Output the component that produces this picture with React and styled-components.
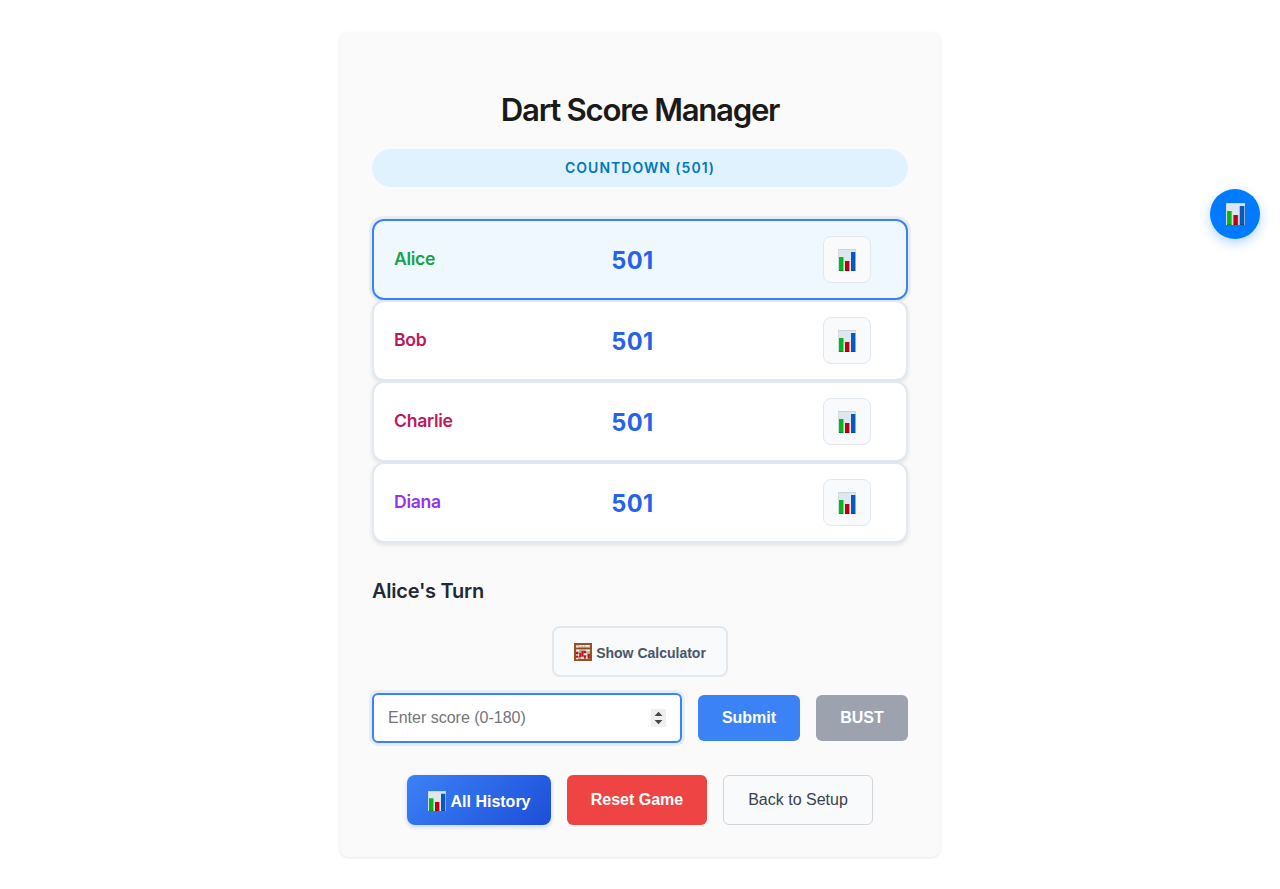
import React, { useState } from "react";
import styled, { createGlobalStyle, css } from "styled-components";

const GlobalStyle = createGlobalStyle`
  *, *::before, *::after { box-sizing: border-box; }
  body {
    margin: 0;
    background: #ffffff;
    font-family: Inter, "Liberation Sans", sans-serif;
    -webkit-font-smoothing: antialiased;
  }
  button, input { font-family: "Liberation Sans", Arial, sans-serif; }
`;

const Page = styled.div`
  padding: 32px 0;
`;

const Panel = styled.main`
  width: 600px;
  height: 825px;
  margin: 0 auto;
  padding: 32px;
  border-radius: 8px;
  background: #fafafa;
  box-shadow: 0 1px 3px rgba(0, 0, 0, 0.1);
`;

const Title = styled.h1`
  margin: 26px 0 19px;
  font-size: 31.2px;
  line-height: 40px;
  font-weight: 600;
  letter-spacing: -1.3px;
  text-align: center;
  color: #1a1a1a;
`;

const ModeBadge = styled.div`
  height: 38px;
  margin-bottom: 32px;
  border-radius: 20px;
  background: #e0f2fe;
  color: #0277bd;
  font-size: 14px;
  line-height: 38px;
  font-weight: 600;
  letter-spacing: 1px;
  text-align: center;
  text-transform: uppercase;
`;

const PlayerRow = styled.div`
  display: grid;
  grid-template-columns: 63px 1fr 78px;
  align-items: center;
  height: 81px;
  padding: 0 20px;
  border: 2px solid #e2e8f0;
  border-radius: 12px;
  background: #ffffff;
  box-shadow: 0 2px 4px rgba(0, 0, 0, 0.1);
  ${(p) =>
    p.$active &&
    css`
      border-color: #3b82f6;
      background: #f0f8ff;
      box-shadow: 0 0 0 3px rgba(59, 130, 246, 0.1);
    `}
`;

const PlayerName = styled.span`
  color: ${(p) => p.$color};
  font-size: 17.6px;
  line-height: 26px;
  font-weight: 600;
  letter-spacing: -0.3px;
  padding-bottom: 2px;
`;

const PlayerScore = styled.span`
  color: #2563eb;
  font-size: 23.6px;
  line-height: 36px;
  font-weight: 700;
  letter-spacing: 0.4px;
  text-align: center;
  padding-top: 3px;
`;

const HistoryButton = styled.button`
  display: flex;
  align-items: center;
  justify-content: center;
  justify-self: center;
  width: 48px;
  height: 47px;
  padding: 1px 0 0;
  border: 1px solid #e2e8f0;
  border-radius: 8px;
  background: #f8fafc;
`;

const TurnHeading = styled.h2`
  margin: 33px 0 20px;
  font-size: 20px;
  line-height: 30px;
  font-weight: 600;
  letter-spacing: -0.25px;
  color: #1f2937;
`;

const CalculatorButton = styled.button`
  display: flex;
  align-items: center;
  justify-content: center;
  gap: 4px;
  width: 176px;
  height: 51px;
  margin: 0 auto 16px;
  padding: 1px 0 0;
  border: 2px solid #e2e8f0;
  border-radius: 8px;
  background: #f8fafc;
  color: #475569;
  font-size: 14px;
  font-weight: 600;
  span { padding-top: 2px; }
`;

const ScoreForm = styled.div`
  display: flex;
  align-items: center;
  gap: 16px;
  margin-bottom: 32px;
`;

const ScoreField = styled.div`
  position: relative;
  display: flex;
  flex: 1;
  min-width: 0;
`;

const ScoreInput = styled.input`
  width: 100%;
  height: 50px;
  padding: 0 14px;
  border: 2px solid #3b82f6;
  border-radius: 6px;
  outline: none;
  background: #ffffff;
  font-size: 16px;
  caret-color: transparent;
  box-shadow: 0 0 0 3px rgba(59, 130, 246, 0.1);
  appearance: textfield;
  &::placeholder { color: #757575; }
`;

const Spinner = styled.svg`
  position: absolute;
  right: 16px;
  top: 16px;
`;

const Button = styled.button`
  display: flex;
  align-items: center;
  justify-content: center;
  gap: 4px;
  width: ${(p) => p.$width}px;
  height: ${(p) => p.$height || 50}px;
  padding: 0;
  border: none;
  border-radius: 6px;
  font-size: 16px;
  font-weight: 600;
  color: #ffffff;
  background: ${(p) => p.$bg};
`;

const AllHistoryButton = styled(Button)`
  padding: 2px 0 0 1px;
  border-radius: 8px;
  background: linear-gradient(135deg, #3b82f6 0%, #1d4ed8 100%);
  box-shadow: 0 2px 4px rgba(59, 130, 246, 0.3);
  span { padding-top: 1px; }
`;

const BackButton = styled(Button)`
  border: 1px solid #d1d5db;
  background: #f9fafb;
  color: #374151;
  font-weight: 400;
`;

const Actions = styled.div`
  display: flex;
  justify-content: center;
  gap: 16px;
`;

const FloatingButton = styled.button`
  position: fixed;
  top: 189px;
  right: 20px;
  display: flex;
  align-items: center;
  justify-content: center;
  width: 50px;
  height: 50px;
  padding: 0;
  border: none;
  border-radius: 50%;
  background: #007bff;
  box-shadow: 0 4px 12px rgba(0, 123, 255, 0.3);
`;

function ChartIcon({ width = 18, height = 22 }) {
  return (
    <svg width={width} height={height} viewBox="0 0 18 22" preserveAspectRatio="none" aria-hidden="true">
      <rect width="18" height="22" fill="#dfe7ee" />
      <path d="M0 .5H18" stroke="#cbd5dd" />
      <path d="M.3 0V22M17.8 0V22" stroke="#c3ced8" strokeWidth=".6" />
      <path d="M5.4 8V22M11.4 12V22M17.4 3V22" stroke="#a9b2bb" strokeWidth=".8" />
      <rect x="1" y="8" width="4.2" height="14" fill="#08b51c" />
      <rect x="7" y="12" width="4.2" height="10" fill="#c0000c" />
      <rect x="13" y="3" width="4.2" height="19" fill="#0759c1" />
      <path d="M1 21.5H5.2M7 21.5H11.2M13 21.5H17.2" stroke="#000" strokeOpacity=".2" />
    </svg>
  );
}

function AbacusIcon() {
  return (
    <svg width="18" height="18" viewBox="0 0 18 18" aria-hidden="true">
      <rect width="18" height="18" fill="#8f5526" />
      <rect x="2" y="2" width="14" height="14" fill="#c9a797" />
      <path d="M2 5.4H16" stroke="#8f4a1c" strokeWidth="1.4" />
      <path d="M2.3 3.5H4.5M5.5 2.9H7.5M8.5 2.9H10.3M11.3 2.9H15.6" stroke="#f8f2f2" strokeWidth="1.6" />
      <path d="M3 9V11M3 13V15M6 10V14M8.6 8V13.4M11 8V10M11 12.5V15.5M14.8 11V15.5" stroke="#c3131d" strokeWidth="2.2" />
      <path d="M2.2 7.6H5.2M11.8 7.6H15.8M4 11.9H5.3M9.6 11.2H13M7 15H10M12.6 13.5V15.6M2 15.6H4" stroke="#f8f2f2" strokeWidth="1.5" />
    </svg>
  );
}

const players = [
  { name: "Alice", score: 501, color: "#16a34a" },
  { name: "Bob", score: 501, color: "#be185d" },
  { name: "Charlie", score: 501, color: "#be185d" },
  { name: "Diana", score: 501, color: "#9333ea" },
];

export default function App() {
  const [value, setValue] = useState("");
  return (
    <Page>
      <GlobalStyle />
      <Panel>
        <Title>Dart Score Manager</Title>
        <ModeBadge>Countdown (501)</ModeBadge>
        {players.map((player, i) => (
          <PlayerRow key={player.name} $active={i === 0}>
            <PlayerName $color={player.color}>{player.name}</PlayerName>
            <PlayerScore>{player.score}</PlayerScore>
            <HistoryButton aria-label="History"><ChartIcon /></HistoryButton>
          </PlayerRow>
        ))}
        <TurnHeading>Alice's Turn</TurnHeading>
        <CalculatorButton><AbacusIcon /><span>Show Calculator</span></CalculatorButton>
        <ScoreForm>
          <ScoreField>
            <ScoreInput
              type="number"
              autoFocus
              placeholder="Enter score (0-180)"
              value={value}
              onChange={(e) => setValue(e.target.value)}
            />
            <Spinner width="15" height="18" viewBox="0 0 15 18" aria-hidden="true">
              <rect width="15" height="18" fill="#efefef" />
              <path d="M3.5 7L7.5 2.8L11.5 7ZM3.5 11H11.5L7.5 15.2Z" fill="#484848" />
            </Spinner>
          </ScoreField>
          <Button $width={102} $height={46} $bg="#3b82f6">Submit</Button>
          <Button $width={92} $height={46} $bg="#9ca3af">BUST</Button>
        </ScoreForm>
        <Actions>
          <AllHistoryButton $width={144}><ChartIcon height={20} /><span>All History</span></AllHistoryButton>
          <Button $width={140} $bg="#ef4444">Reset Game</Button>
          <BackButton $width={150}>Back to Setup</BackButton>
        </Actions>
      </Panel>
      <FloatingButton aria-label="Statistics"><ChartIcon width={19} /></FloatingButton>
    </Page>
  );
}
